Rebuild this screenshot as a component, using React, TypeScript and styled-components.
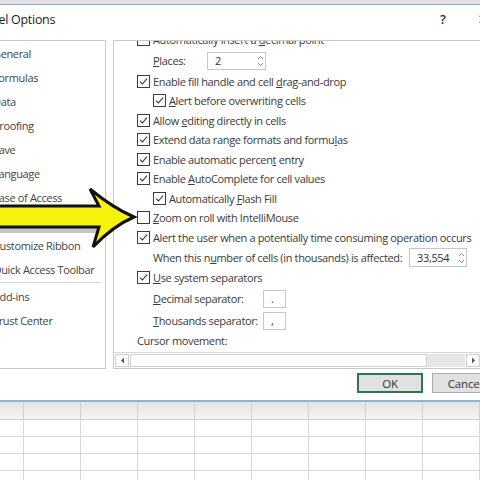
import React from "react";
import styled, { createGlobalStyle } from "styled-components";

const Global = createGlobalStyle`
  html, body { margin: 0; padding: 0; background: #fff; }
  body { font-family: "Open Sans", "Noto Sans", sans-serif; }
`;

const FONT = `"Open Sans", "Noto Sans", sans-serif`;

const Page = styled.div`
  position: relative;
  width: 480px;
  height: 480px;
  overflow: hidden;
  background: #fff;
`;

const TopStrip = styled.div`
  height: 4px;
  background: #e3e3e3;
`;

const Dialog = styled.div`
  margin-left: -24px;
  width: 560px;
  background: #fff;
  border-top: 1px solid #8aa9cc;
  border-bottom: 2px solid #8db4dd;
  display: flex;
  flex-direction: column;
`;

const TitleBar = styled.div`
  height: 35px;
  box-sizing: border-box;
  display: flex;
  align-items: center;
  padding: 0 31px 7px 4px;
  font-family: ${FONT};
  color: #222;
`;

const TitleText = styled.div`
  flex: 1;
  font-size: 12.5px;
  letter-spacing: -0.3px;
`;

const TitleButton = styled.div<{ $w: number }>`
  width: ${(p) => p.$w}px;
  height: 24px;
  display: flex;
  align-items: center;
  justify-content: center;
  font-size: 13px;
  font-weight: 600;
  color: #333;
`;

const Body = styled.div`
  height: 329px;
  display: flex;
  gap: 7px;
  padding-left: 10px;
`;

const Nav = styled.div`
  width: 118px;
  border: 1px solid #c9c9c9;
  display: flex;
  flex-direction: column;
  font-family: ${FONT};
  font-size: 11px;
  letter-spacing: -0.35px;
  color: #444;
`;

const NavItem = styled.div<{ $selected?: boolean }>`
  height: 24px;
  display: flex;
  align-items: center;
  padding-left: 6px;
  margin-right: 3px;
  background: ${(p) => (p.$selected ? "#c6c6c6" : "transparent")};
  white-space: nowrap;
`;

const NavSep = styled.div`
  height: 1px;
  margin: 1px 4px 1px 0;
  background: #d6d6d6;
`;

const Panel = styled.div`
  width: 418px;
  border: 1px solid #c9c9c9;
  display: flex;
  flex-direction: column;
`;

const ScrollArea = styled.div`
  flex: 1;
  overflow: hidden;
  padding-left: 23px;
  font-family: ${FONT};
  font-size: 11px;
  letter-spacing: -0.35px;
  color: #3a3a3a;
`;

const Content = styled.div`
  margin-top: -11px;
  display: flex;
  flex-direction: column;
`;

const Row = styled.div<{ $h?: number; $indent?: number }>`
  height: ${(p) => p.$h ?? 19.5}px;
  display: flex;
  align-items: center;
  padding-left: ${(p) => p.$indent ?? 0}px;
  white-space: nowrap;
`;

const Box = styled.span`
  width: 11px;
  height: 11px;
  border: 1px solid #3c3c3c;
  background: #fff;
  margin-right: 3px;
  display: flex;
  align-items: center;
  justify-content: center;
  flex-shrink: 0;
`;

const Radio = styled.span`
  width: 10px;
  height: 10px;
  border: 1px solid #555;
  border-radius: 50%;
  margin-right: 4px;
  flex-shrink: 0;
`;

const Label = styled.span<{ $w?: number }>`
  display: inline-block;
  width: ${(p) => (p.$w ? `${p.$w}px` : "auto")};
`;

const Field = styled.div<{ $w: number; $h: number }>`
  width: ${(p) => p.$w}px;
  height: ${(p) => p.$h}px;
  box-sizing: border-box;
  border: 1px solid #c6c6c6;
  background: #fff;
  display: flex;
  align-items: center;
  padding-left: 7px;
  color: #333;
`;

const FieldValue = styled.span`
  flex: 1;
`;

const SpinWrap = styled.span`
  width: 10px;
  display: flex;
  justify-content: center;
`;

const NumberRow = styled(Row)`
  width: 314px;
  justify-content: space-between;
`;

const HScroll = styled.div`
  height: 15px;
  border-top: 1px solid #d8d8d8;
  display: flex;
  background: #fff;
`;

const ScrollBtn = styled.div`
  width: 14px;
  box-sizing: border-box;
  border: 1px solid #cfcfcf;
  margin: 1px;
  display: flex;
  align-items: center;
  justify-content: center;
`;

const Thumb = styled.div`
  width: 297px;
  box-sizing: border-box;
  border: 1px solid #cfcfcf;
  margin: 1px 0;
  background: #fff;
`;

const Track = styled.div`
  width: 38px;
  background: #e6e6e6;
  margin: 1px 0;
`;

const Footer = styled.div`
  height: 31px;
  display: flex;
  justify-content: flex-end;
  align-items: flex-start;
  gap: 9px;
  padding: 4px 38px 0 0;
  box-sizing: border-box;
`;

const Button = styled.div<{ $default?: boolean }>`
  width: 66px;
  height: 20px;
  box-sizing: border-box;
  border: ${(p) => (p.$default ? "2px solid #2f7550" : "1px solid #adadad")};
  background: #e1e1e1;
  display: flex;
  align-items: center;
  justify-content: center;
  font-family: ${FONT};
  font-size: 11.5px;
  letter-spacing: -0.2px;
  color: #333;
`;

const Sheet = styled.div`
  display: grid;
  grid-template-columns: 24px repeat(8, 57px);
`;

const HeadCell = styled.div`
  height: 17px;
  border-right: 1px solid #d2d2d2;
  border-bottom: 1px solid #cfcfcf;
  background: linear-gradient(#e4e4e4, #f4f4f4);
`;

const Cell = styled.div`
  height: 16px;
  border-right: 1px solid #d6d6d6;
  border-bottom: 1px solid #d6d6d6;
  background: #fff;
`;

const ArrowLayer = styled.svg`
  position: absolute;
  left: 0;
  top: 180px;
`;

const CheckMark = () => (
  <svg width="9" height="9" viewBox="0 0 9 9">
    <path d="M1 4.6 L3.4 7 L8 1.6" fill="none" stroke="#333" strokeWidth="1.1" />
  </svg>
);

const Spin = () => (
  <svg width="7" height="12" viewBox="0 0 7 12">
    <path d="M1 4 L3.5 1.5 L6 4 M1 8 L3.5 10.5 L6 8" fill="none" stroke="#888" strokeWidth="1" />
  </svg>
);

const Check: React.FC<{ on?: boolean }> = ({ on }) => <Box>{on ? <CheckMark /> : null}</Box>;

const Opt: React.FC<{ on?: boolean; indent?: boolean; children: React.ReactNode }> = ({
  on,
  indent,
  children,
}) => (
  <Row $indent={indent ? 16 : 0}>
    <Check on={on} />
    <span>{children}</span>
  </Row>
);

const navItems = [
  "General",
  "Formulas",
  "Data",
  "Proofing",
  "Save",
  "Language",
  "Ease of Access",
  "Advanced",
  "Customize Ribbon",
  "Quick Access Toolbar",
];

export default function App() {
  const cols = Array.from({ length: 9 });
  const rows = Array.from({ length: 4 });
  return (
    <Page>
      <Global />
      <TopStrip />
      <Dialog>
        <TitleBar>
          <TitleText>Excel Options</TitleText>
          <TitleButton $w={36}>?</TitleButton>
          <TitleButton $w={44}>✕</TitleButton>
        </TitleBar>
        <Body>
          <Nav>
            {navItems.map((n) => (
              <NavItem key={n} $selected={n === "Advanced"}>
                {n}
              </NavItem>
            ))}
            <NavSep />
            <NavItem>Add-ins</NavItem>
            <NavItem>Trust Center</NavItem>
          </Nav>
          <Panel>
            <ScrollArea>
              <Content>
                <Opt>
                  Automatically insert a <u>d</u>ecimal point
                </Opt>
                <Row $h={22} $indent={16}>
                  <Label $w={54}>
                    <u>P</u>laces:
                  </Label>
                  <Field $w={59} $h={18}>
                    <FieldValue>2</FieldValue>
                    <SpinWrap>
                      <Spin />
                    </SpinWrap>
                  </Field>
                </Row>
                <Opt on>
                  Enable fill handle and cell <u>d</u>rag-and-drop
                </Opt>
                <Opt on indent>
                  <u>A</u>lert before overwriting cells
                </Opt>
                <Opt on>
                  Allow <u>e</u>diting directly in cells
                </Opt>
                <Opt on>
                  Extend data range formats and formu<u>l</u>as
                </Opt>
                <Opt on>
                  Enable automatic percen<u>t</u> entry
                </Opt>
                <Opt on>
                  Enable <u>A</u>utoComplete for cell values
                </Opt>
                <Opt on indent>
                  Automatically <u>F</u>lash Fill
                </Opt>
                <Opt>
                  <u>Z</u>oom on roll with IntelliMouse
                </Opt>
                <Opt on>Alert the user when a potentially time consuming operation occurs</Opt>
                <NumberRow $h={21} $indent={16}>
                  <span>
                    When this n<u>u</u>mber of cells (in thousands) is affected:
                  </span>
                  <Field $w={58} $h={19}>
                    <FieldValue>33,554</FieldValue>
                    <SpinWrap>
                      <Spin />
                    </SpinWrap>
                  </Field>
                </NumberRow>
                <Opt on>
                  <u>U</u>se system separators
                </Opt>
                <Row $h={22} $indent={16}>
                  <Label $w={110}>
                    <u>D</u>ecimal separator:
                  </Label>
                  <Field $w={23} $h={18}>
                    .
                  </Field>
                </Row>
                <Row $h={22} $indent={16}>
                  <Label $w={110}>
                    <u>T</u>housands separator:
                  </Label>
                  <Field $w={23} $h={18}>
                    ,
                  </Field>
                </Row>
                <Row $h={18}>Cursor movement:</Row>
                <Row $h={20} $indent={16}>
                  <Radio />
                  <span>Logical</span>
                </Row>
              </Content>
            </ScrollArea>
            <HScroll>
              <ScrollBtn>
                <svg width="5" height="7" viewBox="0 0 5 7">
                  <path d="M4 0.5 L1 3.5 L4 6.5 Z" fill="#555" />
                </svg>
              </ScrollBtn>
              <Thumb />
              <Track />
              <ScrollBtn>
                <svg width="5" height="7" viewBox="0 0 5 7">
                  <path d="M1 0.5 L4 3.5 L1 6.5 Z" fill="#555" />
                </svg>
              </ScrollBtn>
            </HScroll>
          </Panel>
        </Body>
        <Footer>
          <Button $default>OK</Button>
          <Button>Cancel</Button>
        </Footer>
      </Dialog>
      <Sheet>
        {cols.map((_, i) => (
          <HeadCell key={`h${i}`} />
        ))}
        {rows.map((_, r) => cols.map((_, c) => <Cell key={`${r}-${c}`} />))}
      </Sheet>
      <ArrowLayer width="140" height="75" viewBox="0 0 140 75">
        <path
          d="M -5 26 L 99 26 L 90 9 Q 113 28 134 37 Q 113 46 93 67 L 99 47 L -5 47 Z"
          fill="#f6f20c"
          stroke="#111"
          strokeWidth="3"
          strokeLinejoin="miter"
        />
      </ArrowLayer>
    </Page>
  );
}
